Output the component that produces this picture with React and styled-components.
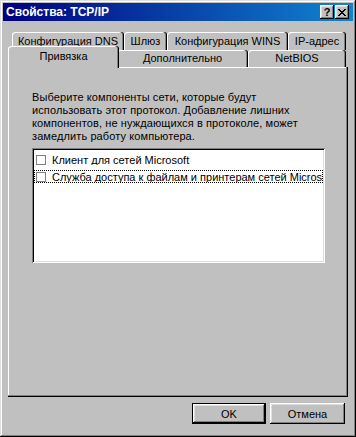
import styled, { createGlobalStyle } from 'styled-components';

const GlobalStyle = createGlobalStyle`
  html, body {
    margin: 0;
    padding: 0;
    background: #c0c0c0;
  }
  body {
    font-family: "Liberation Sans", Arial, sans-serif;
    font-size: 11px;
    color: #000;
  }
  * {
    box-sizing: border-box;
  }
`;

const bevelOut = `
  inset -1px -1px #000,
  inset 1px 1px #fff,
  inset -2px -2px #808080,
  inset 2px 2px #dfdfdf
`;

const Window = styled.div`
  width: 356px;
  height: 437px;
  display: flex;
  flex-direction: column;
  padding: 3px;
  background: #c0c0c0;
  box-shadow: inset -1px -1px #000, inset 1px 1px #dfdfdf,
    inset -2px -2px #808080, inset 2px 2px #fff;
`;

const TitleBar = styled.div`
  height: 18px;
  display: flex;
  align-items: center;
  padding: 0 4px 0 2px;
  background: linear-gradient(90deg, #000080, #1084d0);
  color: #fff;
  font-weight: bold;
  font-size: 12px;
`;

const Title = styled.span`
  flex: 1;
  padding-left: 1px;
  white-space: nowrap;
`;

const CaptionButton = styled.div`
  width: 14px;
  height: 14px;
  margin-left: ${(p) => p.$gap || 0}px;
  display: flex;
  align-items: center;
  justify-content: center;
  background: #c0c0c0;
  color: #000;
  font-weight: bold;
  font-size: 11px;
  box-shadow: ${bevelOut};
`;

const Body = styled.div`
  flex: 1;
  display: flex;
  flex-direction: column;
  padding: 11px 5px 0;
`;

const TabRow = styled.div`
  display: flex;
  align-items: flex-end;
  height: ${(p) => p.$h}px;
  padding-left: ${(p) => p.$indent}px;
`;

const Tab = styled.div`
  width: ${(p) => p.$w}px;
  height: ${(p) => p.$h}px;
  display: flex;
  align-items: center;
  justify-content: center;
  padding-bottom: 1px;
  white-space: nowrap;
  overflow: hidden;
  background: #c0c0c0;
  border-radius: 3px 3px 0 0;
  box-shadow: inset -1px 0 #000, inset -2px 0 #808080, inset 1px 1px #fff;
`;

const ActiveTab = styled(Tab)`
  position: relative;
  z-index: 1;
  width: ${(p) => p.$w + 4}px;
  height: 22px;
  margin: 0 -2px -1px;
  padding-bottom: 3px;
`;

const Panel = styled.div`
  flex: 1;
  padding: 24px 22px 0 24px;
  box-shadow: inset -1px -1px #000, inset -2px -2px #808080, inset 1px 1px #fff;
`;

const Description = styled.p`
  margin: 0;
  line-height: 13px;
  letter-spacing: 0.1px;
  white-space: nowrap;
`;

const ListBox = styled.div`
  width: 293px;
  height: 115px;
  margin-top: 5px;
  padding: 3px 2px 2px;
  overflow: hidden;
  background: #fff;
  box-shadow: inset 1px 1px #808080, inset -1px -1px #fff,
    inset 2px 2px #000, inset -2px -2px #dfdfdf;
`;

const ListRow = styled.div`
  height: 17px;
  padding: 2px 0;
`;

const RowInner = styled.div`
  height: 13px;
  display: flex;
  align-items: center;
  gap: 6px;
  padding-left: 1px;
  white-space: nowrap;
  overflow: hidden;
  border: 1px dotted ${(p) => (p.$focus ? '#000' : 'transparent')};
`;

const Check = styled.span`
  flex: none;
  width: 10px;
  height: 10px;
  background: #fff;
  border: 1px solid #808080;
`;

const Footer = styled.div`
  display: flex;
  justify-content: flex-end;
  gap: 4px;
  padding: 6px 3px 10px 0;
`;

const Button = styled.button`
  width: ${(p) => p.$w}px;
  height: 21px;
  padding: 0;
  font-family: "Liberation Sans", Arial, sans-serif;
  font-size: 11px;
  color: #000;
  background: #c0c0c0;
  border: ${(p) => (p.$default ? '1px solid #000' : 'none')};
  box-shadow: ${bevelOut};
`;

const CloseGlyph = () => (
  <svg width="8" height="7" viewBox="0 0 8 7" shapeRendering="crispEdges">
    <path
      fill="#000"
      d="M0 0h2v1H0zM6 0h2v1H6zM1 1h2v1H1zM5 1h2v1H5zM2 2h4v1H2zM3 3h2v1H3zM2 4h4v1H2zM1 5h2v1H1zM5 5h2v1H5zM0 6h2v1H0zM6 6h2v1H6z"
    />
  </svg>
);

const backTabs = [
  { label: 'Конфигурация DNS', w: 112 },
  { label: 'Шлюз', w: 43 },
  { label: 'Конфигурация WINS', w: 121 },
  { label: 'IP-адрес', w: 58 },
];

const frontTabs = [
  { label: 'Привязка', w: 107, active: true },
  { label: 'Дополнительно', w: 131 },
  { label: 'NetBIOS', w: 98 },
];

const items = [
  { label: 'Клиент для сетей Microsoft' },
  { label: 'Служба доступа к файлам и принтерам сетей Microsoft', focus: true },
];

export default function App() {
  return (
    <>
      <GlobalStyle />
      <Window>
        <TitleBar>
          <Title>Свойства: TCP/IP</Title>
          <CaptionButton>?</CaptionButton>
          <CaptionButton $gap={1}>
            <CloseGlyph />
          </CaptionButton>
        </TitleBar>
        <Body>
          <TabRow $h={18} $indent={4}>
            {backTabs.map((t) => (
              <Tab key={t.label} $w={t.w} $h={18}>
                {t.label}
              </Tab>
            ))}
          </TabRow>
          <TabRow $h={17} $indent={2}>
            {frontTabs.map((t) =>
              t.active ? (
                <ActiveTab key={t.label} $w={t.w}>
                  {t.label}
                </ActiveTab>
              ) : (
                <Tab key={t.label} $w={t.w} $h={17}>
                  {t.label}
                </Tab>
              )
            )}
          </TabRow>
          <Panel>
            <Description>
              Выберите компоненты сети, которые будут
              <br />
              использовать этот протокол. Добавление лишних
              <br />
              компонентов, не нуждающихся в протоколе, может
              <br />
              замедлить работу компьютера.
            </Description>
            <ListBox>
              {items.map((it) => (
                <ListRow key={it.label}>
                  <RowInner $focus={it.focus}>
                    <Check />
                    {it.label}
                  </RowInner>
                </ListRow>
              ))}
            </ListBox>
          </Panel>
          <Footer>
            <Button $w={74} $default>
              OK
            </Button>
            <Button $w={75}>Отмена</Button>
          </Footer>
        </Body>
      </Window>
    </>
  );
}
